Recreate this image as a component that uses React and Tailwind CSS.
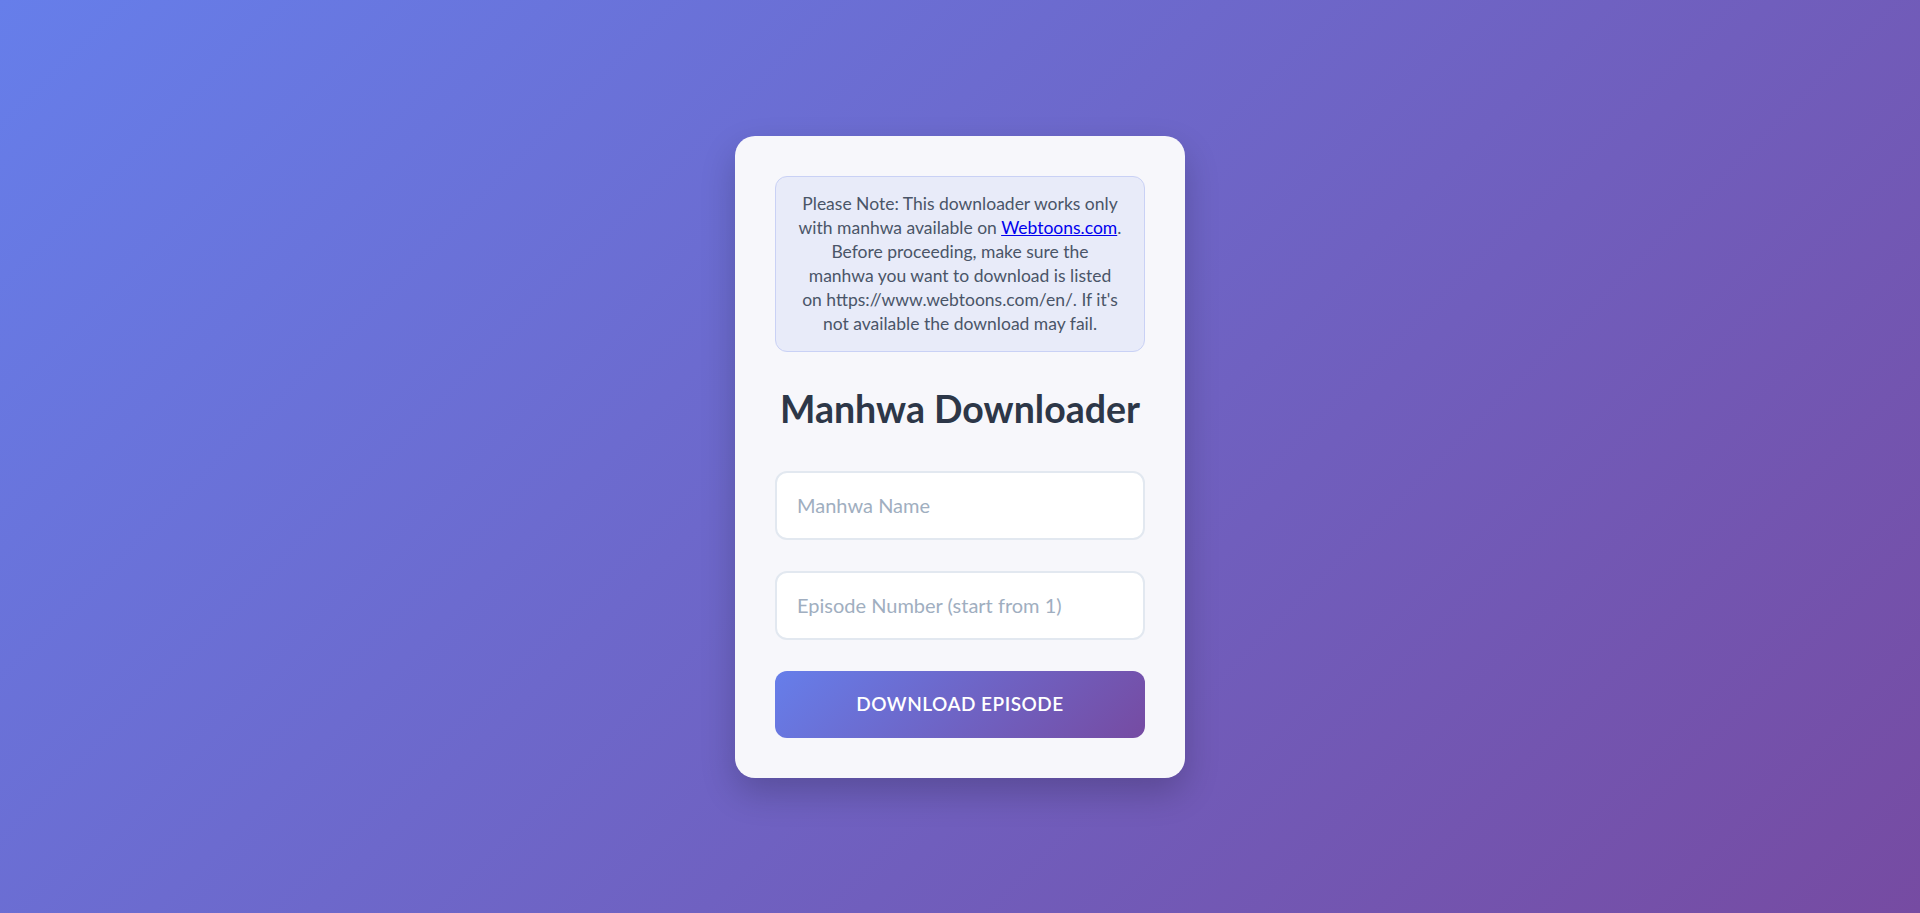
import React from 'react';

const App = () => {
  return (
    <div className="min-h-screen flex items-center justify-center bg-[linear-gradient(135deg,#667eea_0%,#764ba2_100%)] font-['Lato',sans-serif]">
      <div className="w-[450px] bg-[#f7f7fb] rounded-[20px] p-10 shadow-[0_15px_35px_rgba(0,0,0,0.2)]">
        {/* Notice */}
        <div className="bg-[#e8ebf9] border border-[#c9d1f5] rounded-[12px] px-[15px] py-[15px] text-center text-[17.5px] leading-[24px] text-[#4a5568]">
          Please Note: This downloader works only<br />
          with manhwa available on <a href="#" className="text-[#0000ee] underline">Webtoons.com</a>.<br />
          Before proceeding, make sure the<br />
          manhwa you want to download is listed<br />
          on https://www.webtoons.com/en/. If it's<br />
          not available the download may fail.
        </div>

        <h1 className="mt-8 mb-[38px] text-center text-[37.5px] leading-[49px] font-bold text-[#2d3748]">
          Manhwa Downloader
        </h1>

        <div className="flex flex-col gap-[31px]">
          <input
            type="text"
            placeholder="Manhwa Name"
            className="w-full h-[69px] px-5 bg-white border-2 border-[#e2e8f0] rounded-[12px] text-[20px] text-[#2d3748] placeholder:text-[#a0aec0] outline-none"
          />
          <input
            type="number"
            placeholder="Episode Number (start from 1)"
            className="w-full h-[69px] px-5 bg-white border-2 border-[#e2e8f0] rounded-[12px] text-[20px] text-[#2d3748] placeholder:text-[#a0aec0] outline-none"
          />
          <button className="w-full h-[67px] rounded-[12px] bg-[linear-gradient(135deg,#667eea_0%,#764ba2_100%)] text-white text-[19px] font-semibold uppercase tracking-[0.5px]">
            Download Episode
          </button>
        </div>
      </div>
    </div>
  );
};

export default App;
